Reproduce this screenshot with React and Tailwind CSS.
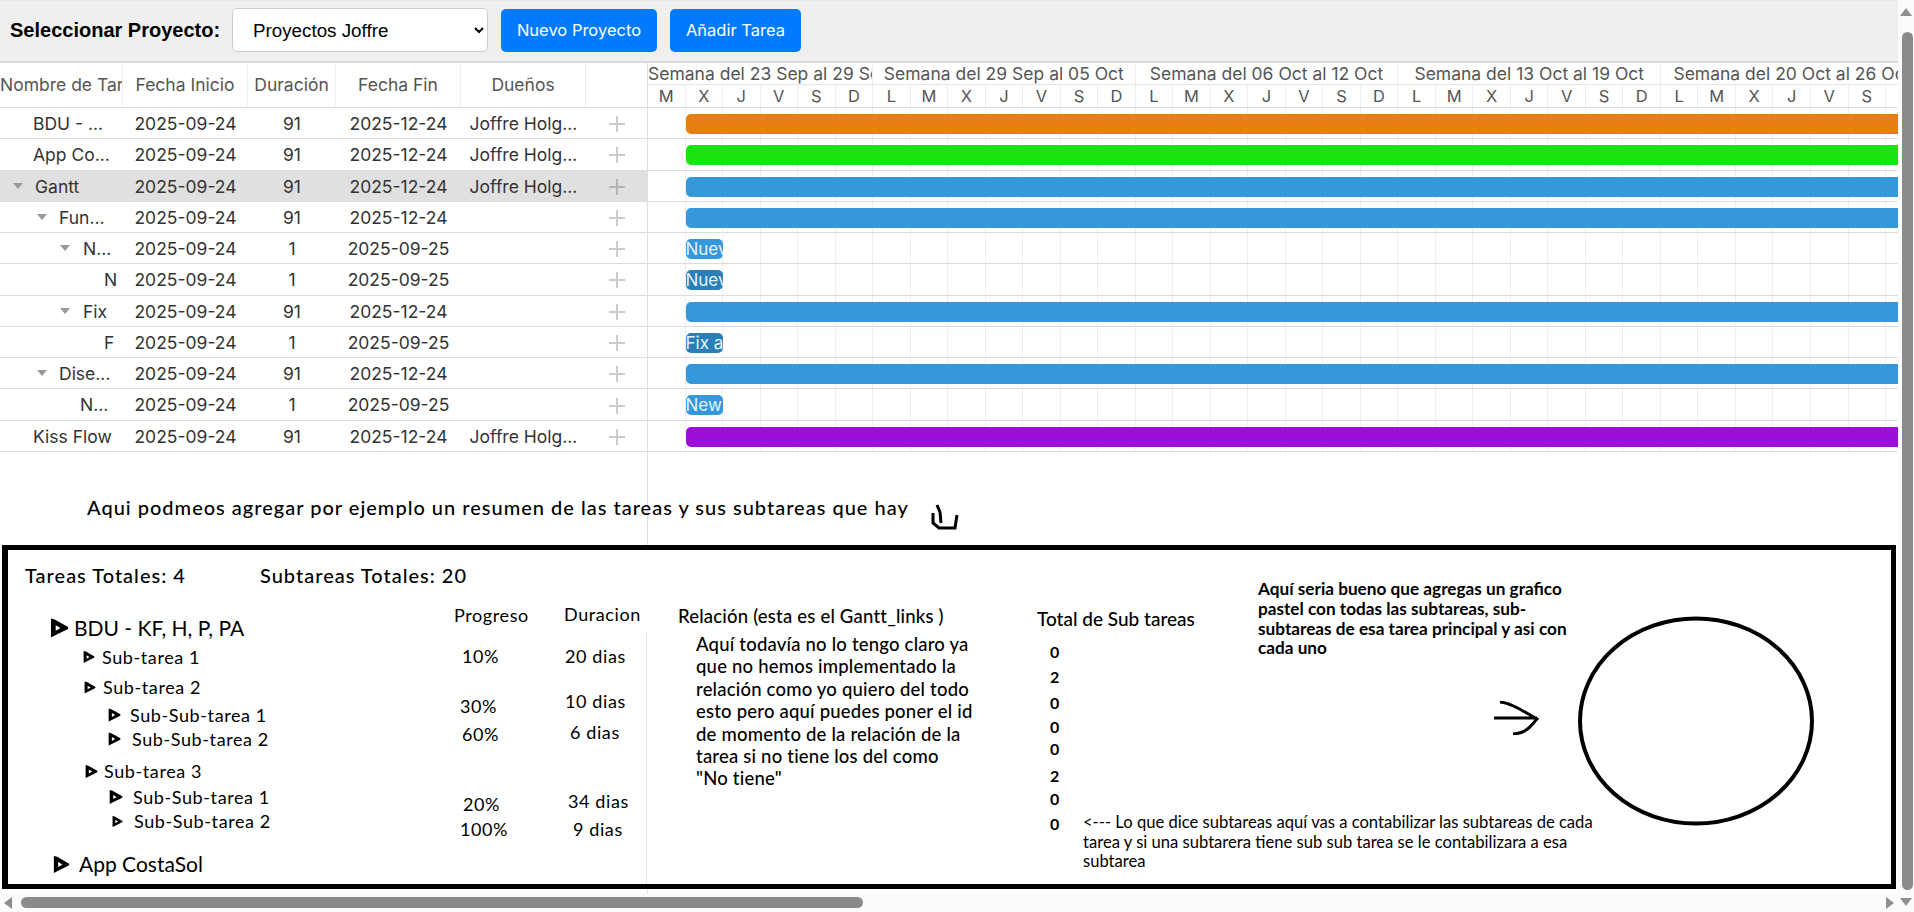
import React from "react";

const days = "M X J V S D L M X J V S D L M X J V S D L M X J V S D L M X J V S D".split(" ");
const weeks = [
  { label: "Semana del 23 Sep al 29 Sep", className: "w-[225px] justify-start" },
  { label: "Semana del 29 Sep al 05 Oct", className: "w-[262.7px] justify-center" },
  { label: "Semana del 06 Oct al 12 Oct", className: "w-[262.7px] justify-center" },
  { label: "Semana del 13 Oct al 19 Oct", className: "w-[262.7px] justify-center" },
  { label: "Semana del 20 Oct al 26 Oct", className: "w-[262.7px] justify-center" },
];

const rows = [
  { name: "BDU - ...", pad: "pl-[33px]", dur: 91, end: "2025-12-24", owner: "Joffre Holg...", bar: "bg-[#e67e14]", wide: true },
  { name: "App Co...", pad: "pl-[33px]", dur: 91, end: "2025-12-24", owner: "Joffre Holg...", bar: "bg-[#1ae30f]", wide: true },
  { name: "Gantt", pad: "pl-[35px]", caret: "left-[13px]", dur: 91, end: "2025-12-24", owner: "Joffre Holg...", bar: "bg-[#3498db]", wide: true, selected: true },
  { name: "Fun...", pad: "pl-[59px]", caret: "left-[37px]", dur: 91, end: "2025-12-24", owner: "", bar: "bg-[#3498db]", wide: true },
  { name: "N...", pad: "pl-[83px]", caret: "left-[60px]", dur: 1, end: "2025-09-25", owner: "", bar: "bg-[#3498db]", label: "Nuevo" },
  { name: "N", pad: "pl-[104px]", dur: 1, end: "2025-09-25", owner: "", bar: "bg-[#2980b9]", label: "Nuevo" },
  { name: "Fix", pad: "pl-[83px]", caret: "left-[60px]", dur: 91, end: "2025-12-24", owner: "", bar: "bg-[#3498db]", wide: true },
  { name: "F", pad: "pl-[104px]", dur: 1, end: "2025-09-25", owner: "", bar: "bg-[#2980b9]", label: "Fix a" },
  { name: "Dise...", pad: "pl-[59px]", caret: "left-[37px]", dur: 91, end: "2025-12-24", owner: "", bar: "bg-[#3498db]", wide: true },
  { name: "N...", pad: "pl-[80px]", dur: 1, end: "2025-09-25", owner: "", bar: "bg-[#3498db]", label: "New" },
  { name: "Kiss Flow", pad: "pl-[33px]", dur: 91, end: "2025-12-24", owner: "Joffre Holg...", bar: "bg-[#9b0fd8]", wide: true },
];

const ink = { fontFamily: "Lato, sans-serif" };

function PlayMark({ className }) {
  return (
    <svg viewBox="0 0 20 20" className={className}>
      <path d="M1 0 L5 1 L19 9 L19 11 L5 18 L1 20 Z" fill="#000" />
      <path d="M6 7 L11 10 L6 13 Z" fill="#fff" />
    </svg>
  );
}

function TreeRow({ className, icon, text }) {
  return (
    <div className={`flex items-center whitespace-nowrap ${className}`}>
      <PlayMark className={icon} />
      <span>{text}</span>
    </div>
  );
}

function App() {
  return (
    <div className="flex h-[912px] w-[1914px] overflow-hidden bg-white" style={{ fontFamily: "Inter, sans-serif" }}>
      <div className="flex w-[1898px] flex-col">
        {/* toolbar */}
        <div className="flex h-[63px] shrink-0 items-center border-t border-t-[#e3e8ee] border-b-2 border-b-[#d9d9d9] bg-[#efefef] pb-[2px]">
          <label className="ml-[10px] w-[222px] whitespace-nowrap text-[20px] font-bold text-black" style={{ fontFamily: "Liberation Sans, sans-serif" }}>
            Seleccionar Proyecto:
          </label>
          <select
            className="h-[44px] w-[256px] rounded-[5px] border border-[#cccccc] bg-white pl-[16px] text-[18.8px] text-black"
            style={{ fontFamily: "Liberation Sans, sans-serif" }}
            defaultValue="Proyectos Joffre"
          >
            <option>Proyectos Joffre</option>
          </select>
          <button className="ml-[13px] h-[43px] w-[156px] rounded-[5px] bg-[#007bff] text-[16.5px] text-white">Nuevo Proyecto</button>
          <button className="ml-[13px] h-[43px] w-[131px] rounded-[5px] bg-[#007bff] text-[16.5px] text-white">Añadir Tarea</button>
        </div>

        {/* gantt */}
        <div className="relative flex h-[830px] shrink-0">
          <div className="h-full w-[648px] shrink-0 border-r border-r-[#e0e0e0]">
            <div className="flex h-[45px] border-b border-b-[#dcdcdc] pt-[1px] text-[17.5px] text-[#555555]">
              <div className="flex w-[123px] items-center overflow-hidden whitespace-nowrap border-r border-r-[#eeeeee]">Nombre de Tarea</div>
              <div className="flex w-[125px] items-center justify-center border-r border-r-[#eeeeee]">Fecha Inicio</div>
              <div className="flex w-[88px] items-center justify-center border-r border-r-[#eeeeee]">Duración</div>
              <div className="flex w-[125px] items-center justify-center border-r border-r-[#eeeeee]">Fecha Fin</div>
              <div className="flex w-[125px] items-center justify-center border-r border-r-[#eeeeee]">Dueños</div>
            </div>
            {rows.map((row, i) => (
              <div key={i} className={`flex h-[31.27px] items-center border-b border-b-[#dcdcdc] pt-[2px] text-[17.5px] text-[#333333] ${row.selected ? "bg-[#e0e0e0]" : ""}`}>
                <div className={`relative w-[123px] whitespace-nowrap ${row.pad}`}>
                  {row.caret && <span className={`absolute top-[9px] h-0 w-0 border-x-[5px] border-t-[6px] border-x-transparent border-t-[#999999] ${row.caret}`} />}
                  {row.name}
                </div>
                <div className="w-[125px] text-center">2025-09-24</div>
                <div className="w-[88px] text-center">{row.dur}</div>
                <div className="w-[125px] text-center">{row.end}</div>
                <div className="w-[125px] text-center">{row.owner}</div>
                <div className="flex w-[61px] justify-center">
                  <svg width="16" height="16" viewBox="0 0 16 16">
                    <path d="M8 0 V16 M0 8 H16" stroke={row.selected ? "#b5b5b5" : "#cccccc"} strokeWidth="2" />
                  </svg>
                </div>
              </div>
            ))}
          </div>

          <div className="h-full min-w-0 flex-1 overflow-hidden">
            <div className="flex h-[22px] w-[1400px] border-b border-b-[#e6e6e6] pt-[1px] text-[17.5px] text-[#555555]">
              {weeks.map((w) => (
                <div key={w.label} className={`flex shrink-0 items-center overflow-hidden whitespace-nowrap border-r border-r-[#eeeeee] ${w.className}`}>
                  {w.label}
                </div>
              ))}
            </div>
            <div className="flex h-[23px] w-[1400px] border-b border-b-[#dcdcdc] text-[16.5px] text-[#555555]">
              {days.map((d, i) => (
                <div key={i} className="flex w-[37.53px] shrink-0 items-center justify-center border-r border-r-[#eeeeee]">{d}</div>
              ))}
            </div>
            {rows.map((row, i) => (
              <div key={i} className="relative flex h-[31.27px] w-[1400px] border-b border-b-[#dcdcdc]">
                {days.map((_, j) => (
                  <div key={j} className="h-full w-[37.53px] shrink-0 border-r border-r-[#eeeeee]" />
                ))}
                <div className={`absolute left-[37.5px] top-[6px] h-[20px] overflow-hidden whitespace-nowrap rounded-[5px] text-[17px] leading-[20px] text-[#e6f3fc] ${row.bar} ${row.wide ? "w-[1300px]" : "w-[37px]"}`}>
                  {row.label}
                </div>
              </div>
            ))}
          </div>

          {/* pasted notes over the chart */}
          <div className="absolute left-[87px] top-[430px] flex items-start whitespace-nowrap text-[20px] leading-[28px] text-black" style={ink}>
            <span className="font-medium tracking-[1px]">Aqui podmeos agregar por ejemplo un resumen de las tareas y sus subtareas que hay</span>
            <svg width="30" height="30" viewBox="0 0 30 30" className="ml-[22px] mt-[10px]">
              <path d="M2 10 L2 20 L8 25 L24 25 L26 12" fill="none" stroke="#000" strokeWidth="3" />
              <path d="M6 2 L9 9 L10 20" fill="none" stroke="#000" strokeWidth="3" />
            </svg>
          </div>

          <div className="absolute bottom-[4px] left-[2px] flex h-[344px] w-[1894px] border-[5px] border-l-[6px] border-black bg-white text-black" style={ink}>
            <div className="absolute bottom-0 left-[638px] top-[82px] w-px bg-[#e6e6e6]" />

            {/* totals, tree, progress, duration */}
            <div className="flex w-[670px] shrink-0 flex-col">
              <div className="mt-[12px] flex h-[26px] items-center whitespace-nowrap pl-[17px] text-[20px] font-medium tracking-[1px]">
                <span className="w-[235px] shrink-0">Tareas Totales: 4</span>
                <span>Subtareas Totales: 20</span>
              </div>
              <div className="flex tracking-[0.6px]">
                <div className="flex w-[446px] shrink-0 flex-col text-[18px]">
                  <TreeRow className="ml-[42px] mt-[27px] h-[26px] text-[21px] tracking-normal" icon="mr-[5px] h-[20px] w-[19px]" text="BDU - KF, H, P, PA" />
                  <TreeRow className="ml-[75px] mt-[3px] h-[26px]" icon="mr-[7px] h-[12px] w-[12px]" text="Sub-tarea 1" />
                  <TreeRow className="ml-[76px] mt-[4px] h-[26px]" icon="mr-[7px] h-[13px] w-[12px]" text="Sub-tarea 2" />
                  <TreeRow className="ml-[100px] mt-[3px] h-[24px]" icon="mr-[9px] h-[14px] w-[13px]" text="Sub-Sub-tarea 1" />
                  <TreeRow className="ml-[100px] h-[24px]" icon="mr-[11px] h-[14px] w-[13px]" text="Sub-Sub-tarea 2" />
                  <TreeRow className="ml-[77px] mt-[7px] h-[26px]" icon="mr-[6px] h-[13px] w-[13px]" text="Sub-tarea 3" />
                  <TreeRow className="ml-[101px] h-[26px]" icon="mr-[10px] h-[14px] w-[14px]" text="Sub-Sub-tarea 1" />
                  <TreeRow className="ml-[104px] -mt-px h-[24px]" icon="mr-[11px] h-[13px] w-[11px]" text="Sub-Sub-tarea 2" />
                  <TreeRow className="ml-[45px] mt-[16px] h-[30px] text-[21px] tracking-normal" icon="mr-[9px] h-[19px] w-[17px]" text="App CostaSol" />
                </div>
                <div className="flex w-[110px] shrink-0 flex-col text-[18px]">
                  <span className="mt-[15px] h-[24px] leading-[24px]">Progreso</span>
                  <span className="ml-[8px] mt-[17px] h-[24px] leading-[24px]">10%</span>
                  <span className="ml-[6px] mt-[26px] h-[24px] leading-[24px]">30%</span>
                  <span className="ml-[8px] mt-[4px] h-[24px] leading-[24px]">60%</span>
                  <span className="ml-[9px] mt-[46px] h-[24px] leading-[24px]">20%</span>
                  <span className="ml-[6px] mt-px h-[24px] leading-[24px]">100%</span>
                </div>
                <div className="flex flex-col whitespace-nowrap text-[18px]">
                  <span className="mt-[14px] h-[24px] leading-[24px]">Duracion</span>
                  <span className="ml-px mt-[18px] h-[24px] leading-[24px]">20 dias</span>
                  <span className="ml-px mt-[21px] h-[24px] leading-[24px]">10 dias</span>
                  <span className="ml-[6px] mt-[7px] h-[24px] leading-[24px]">6 dias</span>
                  <span className="ml-[4px] mt-[45px] h-[24px] leading-[24px]">34 dias</span>
                  <span className="ml-[9px] mt-[4px] h-[24px] leading-[24px]">9 dias</span>
                </div>
              </div>
            </div>

            {/* relation */}
            <div className="w-[359px] shrink-0 whitespace-nowrap text-[18.5px] font-medium tracking-[0.2px]">
              <div className="mt-[54px] h-[24px] leading-[24px]">Relación (esta es el Gantt_links )</div>
              <div className="ml-[18px] mt-[5px] leading-[22.4px]">
                Aquí todavía no lo tengo claro ya<br />
                que no hemos implementado la<br />
                relación como yo quiero del todo<br />
                esto pero aquí puedes poner el id<br />
                de momento de la relación de la<br />
                tarea si no tiene los del como<br />
                "No tiene"
              </div>
            </div>

            {/* sub task totals */}
            <div className="w-[221px] shrink-0 whitespace-nowrap">
              <div className="mt-[57px] h-[24px] text-[19px] font-medium leading-[24px]">Total de Sub tareas</div>
              <div className="flex">
                <div className="flex w-[46px] shrink-0 flex-col pl-[13px] text-[16px] font-bold">
                  <span className="mt-[9px] h-[24px] leading-[24px]">0</span>
                  <span className="mt-px h-[24px] leading-[24px]">2</span>
                  <span className="mt-[2px] h-[24px] leading-[24px]">0</span>
                  <span className="h-[24px] leading-[24px]">0</span>
                  <span className="-mt-[2px] h-[24px] leading-[24px]">0</span>
                  <span className="mt-[3px] h-[24px] leading-[24px]">2</span>
                  <span className="-mt-px h-[24px] leading-[24px]">0</span>
                  <span className="mt-px h-[24px] leading-[24px]">0</span>
                </div>
                <div className="mt-[182px] text-[16.6px] leading-[19.5px]">
                  {"<--- Lo que dice subtareas aquí vas a contabilizar las subtareas de cada"}<br />
                  tarea y si una subtarera tiene sub sub tarea se le contabilizara a esa<br />
                  subtarea
                </div>
              </div>
            </div>

            {/* pie chart placeholder */}
            <div className="flex">
              <div className="w-[316px] shrink-0">
                <div className="mt-[29px] whitespace-nowrap text-[17.2px] font-bold leading-[19.8px]">
                  Aquí seria bueno que agregas un grafico<br />
                  pastel con todas las subtareas, sub-<br />
                  subtareas de esa tarea principal y asi con<br />
                  cada uno
                </div>
                <svg width="46" height="34" viewBox="0 0 46 34" className="ml-[235px] mt-[43px]">
                  <path d="M1 17 H44 M7 1 C18 2 30 10 44 18 C38 24 35 32 20 33" fill="none" stroke="#000" strokeWidth="3" />
                </svg>
              </div>
              <svg width="244" height="218" viewBox="0 0 244 218" className="mt-[62px]">
                <ellipse cx="122" cy="109" rx="116" ry="102.5" fill="none" stroke="#000" strokeWidth="4" />
              </svg>
            </div>
          </div>
        </div>

        {/* horizontal scrollbar */}
        <div className="flex h-[19px] shrink-0 items-center bg-[#fbfbfb]">
          <span className="ml-[4px] h-0 w-0 border-y-[6px] border-r-[8px] border-y-transparent border-r-[#8f8f8f]" />
          <div className="ml-[9px] h-[11px] w-[842px] rounded-full bg-[#8a8a8a]" />
          <span className="ml-auto mr-[4px] h-0 w-0 border-y-[6px] border-l-[8px] border-y-transparent border-l-[#8f8f8f]" />
        </div>
      </div>

      {/* vertical scrollbar */}
      <div className="flex w-[16px] shrink-0 flex-col items-center bg-[#fbfbfb] pt-[8px]">
        <span className="h-0 w-0 border-x-[6px] border-b-[8px] border-x-transparent border-b-[#8f8f8f]" />
        <div className="ml-[2px] mt-[16px] h-[858px] w-[11px] rounded-full bg-[#8a8a8a]" />
        <span className="mt-[8px] h-0 w-0 border-x-[6px] border-t-[8px] border-x-transparent border-t-[#8f8f8f]" />
      </div>
    </div>
  );
}

export default App;
